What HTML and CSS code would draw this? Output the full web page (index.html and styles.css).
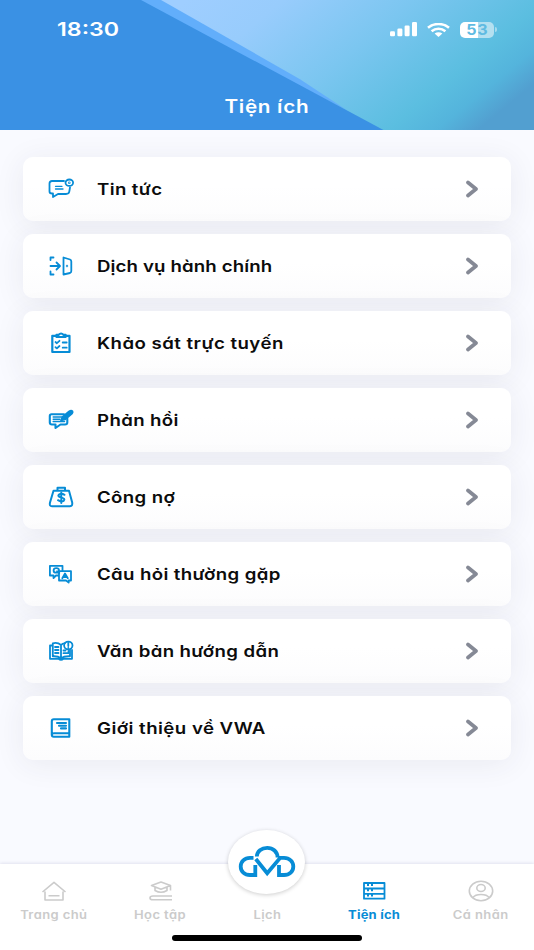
FILE: index.html
```html
<!DOCTYPE html>
<html lang="vi">
<head>
<meta charset="utf-8">
<meta name="viewport" content="width=device-width, initial-scale=1">
<title>Tiện ích</title>
<link rel="stylesheet" href="styles.css">
</head>
<body>
<div class="app">
  <header class="header">
    <svg class="header-art" viewBox="0 0 534 130" preserveAspectRatio="none" aria-hidden="true">
      <defs>
        <linearGradient id="sky" gradientUnits="userSpaceOnUse" x1="0" y1="0" x2="278" y2="339">
          <stop offset=".27" stop-color="#9fceff"/>
          <stop offset=".41" stop-color="#98ccfc"/>
          <stop offset=".6" stop-color="#7bc6f0"/>
          <stop offset=".79" stop-color="#5bbee0"/>
          <stop offset=".86" stop-color="#54b4dc"/>
          <stop offset=".92" stop-color="#529fd0"/>
        </linearGradient>
      </defs>
      <path d="M0 0H534V130H0Z" fill="url(#sky)"/>
      <path d="M130 0H161L300 79L347 110Z" fill="#62aefb"/>
      <path d="M0 0H141L384 130H0Z" fill="#3a91e4"/>
    </svg>
    <div class="status">
      <span class="time">18:30</span>
      <div class="status-icons">
        <svg width="27" height="15" viewBox="0 0 27 15" fill="#fff"><rect x="0" y="9.3" width="5" height="5" rx="1.3"/><rect x="7.4" y="6.5" width="5" height="7.8" rx="1.3"/><rect x="14.6" y="3.5" width="5" height="10.8" rx="1.3"/><rect x="22" y="0" width="5" height="14.3" rx="1.3"/></svg>
        <svg width="23" height="14" viewBox="0 0 23 14" fill="none" stroke="#fff" stroke-width="2.6"><path d="M1 4.8C7 -.2 16 -.2 22 4.800"/><path d="M4.600 8.200C8.600 4.900 14.400 4.900 18.400 8.200"/><path d="M7.600 10.600Q11.500 8 15.400 10.600L11.500 14Z" fill="#fff" stroke="none"/></svg>
        <div class="battery"><span class="five">5</span><span class="three">3</span></div>
      </div>
    </div>
    <h1 class="title"><span>Tiện ích</span></h1>
  </header>

  <main class="list">
    <a class="row"><svg class="icon" viewBox="0 0 28 24"><path d="M17 4H5Q2.500 4 2.500 6.500V14.500Q2.500 16.500 5 16.500H6V20L11 17H19Q22 17 22.300 14.500L23 10.500"/><path d="M8.500 9.300H15M8.500 12H16" stroke-width="1.300"/><ellipse cx="22.300" cy="5.700" rx="3.800" ry="3.200"/><circle cx="22.300" cy="5.700" r=".4"/></svg><span class="label">Tin tức</span><svg class="chevron" viewBox="0 0 14 18"><path d="M3 2.500L11 9L3 15.500"/></svg></a>
    <a class="row"><svg class="icon" viewBox="0 0 28 24"><path d="M6.500 3.500H3.500V6M3.500 17.500V20.500H6.500M3.500 12H12.500M9.500 8.500L13 12L9.500 15.500M16.500 3.500L23 5.500Q24.300 6 24.300 7.500V17Q24.300 18.500 23 19L16.500 20.500Z"/><circle cx="20" cy="12" r=".3"/></svg><span class="label tight">Dịch vụ hành chính</span><svg class="chevron" viewBox="0 0 14 18"><path d="M3 2.500L11 9L3 15.500"/></svg></a>
    <a class="row"><svg class="icon" viewBox="0 0 28 24"><path d="M9 4.800H5.300V21H22.500V4.800H19M9.500 6V3.800H11.700Q14 1.200 16.400 3.800H18.600V6Z" stroke-width="2.200"/><path d="M8.500 11L9.900 12.200L12.500 9.800M8.500 16.200L9.900 17.400L12.500 15M15.700 11.500H19.700M15.700 16.700H19.700" stroke-width="1.800"/></svg><span class="label loose">Khảo sát trực tuyến</span><svg class="chevron" viewBox="0 0 14 18"><path d="M3 2.500L11 9L3 15.500"/></svg></a>
    <a class="row"><svg class="icon" viewBox="0 0 28 24"><path d="M17 6.300H4.500Q2.800 6.300 2.800 8V14.500Q2.800 16.500 5 16.500H8.500V20L13.500 16.500H18Q20.300 16.500 20.300 14.500V10.500" stroke-width="2.100"/><path d="M6.200 9H15M6.200 11.300H13M6.200 13.600H17.500" stroke-width="1.500"/><path d="M14 12.500L15.500 9L22 3.500Q24.300 2 25.500 3.400Q26 4.500 25 5.500L18 11.500Z" fill="#078cd6"/></svg><span class="label">Phản hồi</span><svg class="chevron" viewBox="0 0 14 18"><path d="M3 2.500L11 9L3 15.500"/></svg></a>
    <a class="row"><svg class="icon" viewBox="0 0 28 24"><path d="M6.500 5.800H22L25.200 17.500Q25.800 21.300 23 21.300H5Q2 21.300 3 17.500ZM10.500 5.500V2.800H18V5.500" stroke-width="2"/><path d="M17.500 9.800Q14.500 8 12 9.500Q10 11.300 14.200 12.400Q18.800 13.800 16.700 15.800Q14 17.200 11 15.200M14.300 7.500V18" stroke-width="2"/></svg><span class="label">Công nợ</span><svg class="chevron" viewBox="0 0 14 18"><path d="M3 2.500L11 9L3 15.500"/></svg></a>
    <a class="row"><svg class="icon" viewBox="0 0 28 24"><path d="M11.500 13.500H9L6.500 16V13.500H2.900V3.800H15.500V8.500M12 9.200H24V18.500H21.700V20.500L19 18.500H12Z" stroke-width="1.800"/><ellipse cx="9.300" cy="8.400" rx="2.700" ry="2.300"/><path d="M10 9.200L12.300 11M15.300 16.300L18 11.500L20.800 16.300M16.300 15H20"/></svg><span class="label">Câu hỏi thường gặp</span><svg class="chevron" viewBox="0 0 14 18"><path d="M3 2.500L11 9L3 15.500"/></svg></a>
    <a class="row"><svg class="icon" viewBox="0 0 28 24"><path d="M14 6Q10.500 3 5.800 4.300V17.300Q11 17 14 19.300Q17 17 23 17.300V11M14 6V19M14 6Q15.500 4.500 18 4.200M5 6.500H3V19.800H11.500Q14 21.800 16.500 19.800H25V11" stroke-width="1.800"/><path d="M8 8H11.500M8 11H11.500M8 14H11.500M16.500 11.500H18.500M16.500 14.200H21.500V12"/><ellipse cx="21.300" cy="6.500" rx="4.200" ry="3.900"/><path d="M21.300 4V7M21.300 9V9.100"/></svg><span class="label">Văn bản hướng dẫn</span><svg class="chevron" viewBox="0 0 14 18"><path d="M3 2.500L11 9L3 15.500"/></svg></a>
    <a class="row"><svg class="icon" viewBox="0 0 28 24"><path d="M22.300 17.200V3.200H6.800Q4.800 3.200 4.800 5.500V18.800Q4.800 20.800 6.800 20.800H22.300V17.200H6.800Q5 17.200 4.800 18.800" stroke-width="2.100"/><path d="M10 7H19M12 9.800H19M14 12.400H19" stroke-width="2.100"/></svg><span class="label loose">Giới thiệu về VWA</span><svg class="chevron" viewBox="0 0 14 18"><path d="M3 2.500L11 9L3 15.500"/></svg></a>
  </main>

  <nav class="tabs">
    <a class="tab"><svg class="tab-icon" viewBox="0 0 28 24"><path d="M2.500 13L14 3.300L25.500 13M5 12.500V21H23V12.500M8.500 16.800H19.500"/></svg><span>Trang chủ</span></a>
    <a class="tab"><svg class="tab-icon" viewBox="0 0 28 24"><path d="M4.500 6.500L14 3L23.500 6.500L14 10.200ZM8 8.500V11.500Q14 15 20 11.500V8.500M23.500 6.500V11.500M25 17H6Q3 17 3 19Q3 20.800 6 20.800H25"/></svg><span>Học tập</span></a>
    <a class="tab"><div class="logo"><svg width="62" height="40" viewBox="0 0 62 40"><path d="M17.500 15.800H14C8.500 15.800 4.700 19.500 4.700 24.400C4.700 29.300 8.500 33 14 33H19.300V23M20.800 14.500C21 9.600 25.500 5.800 31.200 5.800C37 5.800 41.500 9.800 41.600 15.500M19.800 17L31.200 31.300L44.200 15.800H48C53.500 15.800 57.300 19.500 57.300 24.400C57.300 29.300 53.500 33 48 33H43V23"/></svg></div><span>Lịch</span></a>
    <a class="tab active"><svg class="tab-icon" viewBox="0 0 28 24"><path d="M4 4H24.500V19.700H4ZM4 9.500H24.500M4 14.800H24.500M7 6H9M11 6H13M7 11.300H9M11 11.300H13M7 16.500H9M11 16.500H13" stroke-width="1.800"/></svg><span>Tiện ích</span></a>
    <a class="tab"><svg class="tab-icon" viewBox="0 0 28 24"><ellipse cx="14" cy="12" rx="11.700" ry="9.800"/><ellipse cx="14" cy="9" rx="4.200" ry="3.500"/><path d="M6 18.500Q8 15.500 14 15.500Q20 15.500 22 18.500"/></svg><span>Cá nhân</span></a>
  </nav>
  <div class="home-indicator"></div>
</div>
</body>
</html>
```
FILE: styles.css
```css
* { box-sizing: border-box; }
body { margin: 0; font-family: Inter, "Liberation Sans", sans-serif; }
.app { position: relative; width: 534px; height: 950px; overflow: hidden; display: flex; flex-direction: column; background: #f9faff; }
.header { position: relative; height: 130.300px; flex: none; display: flex; flex-direction: column; color: #fff; }
.header-art { position: absolute; inset: 0; width: 100%; height: 100%; }
.status { position: relative; display: flex; justify-content: space-between; align-items: center; height: 59px; padding: 0 39px 0 57px; }
.time { font-size: 19px; font-weight: 600; transform: scaleX(1.220); transform-origin: left; }
.status-icons { display: flex; align-items: center; gap: 10px; margin-right: 1px; }
.battery { position: relative; width: 34px; height: 16px; border-radius: 5px; background: linear-gradient(90deg, #fff 54%, #b4e0f0 54%); display: flex; align-items: center; justify-content: center; font-size: 14px; font-weight: 700; color: #5fbbe2; }
.battery::after { content: ""; position: absolute; right: -3px; top: 5.500px; width: 2px; height: 5px; border-radius: 0 2px 2px 0; background: #a5dbef; }
.five, .three { transform: scaleX(1.150); margin: 0 .7px; }
.title { position: relative; margin: 35px 0 0; text-align: center; font-size: 18px; line-height: 24px; font-weight: 600; letter-spacing: .6px; font-feature-settings: "cv11"; }
.title span { display: inline-block; transform: translateY(.5px) scaleX(1.150); }
.list { display: flex; flex-direction: column; gap: 13.140px; padding: 26.300px 23px 0; }
.row { height: 64px; flex: none; display: flex; align-items: center; border-radius: 10px; background: linear-gradient(#fff 45%, #fcfcfd); box-shadow: 0 4px 30px rgba(50, 50, 80, .08); padding: 0 32px 0 24px; }
.icon { width: 28px; height: 24px; margin-left: -.5px; fill: none; stroke: #078cd6; stroke-width: 1.800; stroke-linecap: round; stroke-linejoin: round; }
.label { margin-left: 22.500px; font-size: 16px; line-height: 24px; font-weight: 560; letter-spacing: .32px; color: #0c0c0c; white-space: nowrap; font-feature-settings: "cv11"; transform: scaleX(1.165); transform-origin: left; }
.tight { letter-spacing: .12px; }
.loose { letter-spacing: .4px; }
.chevron { width: 14px; height: 18px; margin-left: auto; fill: none; stroke: #858995; stroke-width: 3.700; stroke-linecap: round; stroke-linejoin: round; }
.tabs { margin-top: auto; height: 86.500px; flex: none; display: flex; background: #fff; box-shadow: 0 -1px 3px rgba(60, 60, 120, .12); }
.tab { position: relative; flex: 1; display: flex; flex-direction: column; align-items: center; justify-content: flex-start; padding-top: 15px; color: #cbcbcb; font-size: 11.500px; line-height: 16px; font-weight: 600; letter-spacing: .35px; font-feature-settings: "cv11"; }
.tab-icon { position: relative; left: .5px; width: 28px; height: 24px; margin-bottom: 4px; fill: none; stroke: currentColor; stroke-width: 1.600; stroke-linejoin: round; }
.tab span { transform: scaleX(1.130); }
.active { color: #078cd6; }
.active span { font-weight: 700; letter-spacing: .2px; }
.logo { position: absolute; top: -34px; left: 50%; margin-left: -38.500px; width: 77px; height: 64px; border-radius: 50%; background: #fff; box-shadow: 0 1px 4px rgba(0, 0, 0, .2); display: flex; align-items: center; justify-content: center; }
.logo svg { fill: none; stroke: #078cd6; stroke-width: 3.800; }
.logo + span { margin-top: 28px; }
.home-indicator { position: absolute; left: 172px; bottom: 9px; width: 190px; height: 6px; border-radius: 3px; background: #000; }
```
